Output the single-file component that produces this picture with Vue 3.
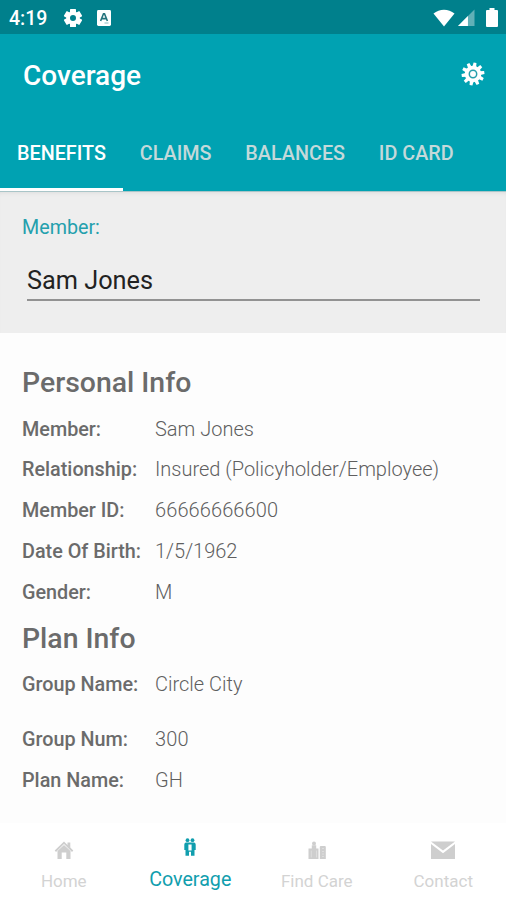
<script setup>
import { ref } from 'vue'

const tabs = ['BENEFITS', 'CLAIMS', 'BALANCES', 'ID CARD']
const activeTab = ref('BENEFITS')

const sections = [
  {
    title: 'Personal Info',
    rows: [
      { label: 'Member:', value: 'Sam Jones' },
      { label: 'Relationship:', value: 'Insured (Policyholder/Employee)' },
      { label: 'Member ID:', value: '66666666600' },
      { label: 'Date Of Birth:', value: '1/5/1962' },
      { label: 'Gender:', value: 'M' },
    ],
  },
  {
    title: 'Plan Info',
    rows: [
      { label: 'Group Name:', value: 'Circle City', spaced: true },
      { label: 'Group Num:', value: '300' },
      { label: 'Plan Name:', value: 'GH' },
    ],
  },
]

const teeth = Array.from({ length: 10 }, (_, i) => i * 36 + 10)
const cogTeeth = [0, 60, 120, 180, 240, 300]
</script>

<template>
  <div class="screen">
    <div class="status">
      <span class="clock">4:19</span>
      <svg class="cog" viewBox="0 0 20 20">
        <rect v-for="a in cogTeeth" :key="a" x="7" y="1" width="6" height="5" rx="0.6" :transform="`rotate(${a} 10 10)`" />
        <circle cx="10" cy="10" r="4.9" fill="none" stroke="#fff" stroke-width="3.8" />
      </svg>
      <svg class="app-badge" viewBox="0 0 14 16">
        <rect width="14" height="16" rx="1.4" />
        <path d="M3.6 11 6.5 3.8h1L10.4 11M4.8 8.6h4.4" fill="none" stroke="#26747d" stroke-width="1.6" />
        <path d="M7.5 13h4" stroke="#8bbcc1" stroke-width="1" />
      </svg>
      <span class="grow"></span>
      <svg class="wifi" viewBox="0 0 22 18"><path d="M.5 4.6C6.5-.5 15.5-.5 21.500 4.600L11 17.500z" /></svg>
      <svg class="signal" viewBox="0 0 18 18">
        <path d="M17.500 0V17.500H0z" opacity="0.38" />
        <path d="M10.500 7V17.500H0z" />
      </svg>
      <svg class="battery" viewBox="0 0 12 19"><path d="M3.500 0h5v2H11q1 0 1 1v15q0 1-1 1H1q-1 0-1-1V3q0-1 1-1h2.500z" /></svg>
    </div>

    <header class="bar">
      <h1>Coverage</h1>
      <svg class="gear" viewBox="0 0 24 24">
        <path v-for="a in teeth" :key="a" d="M10 6 10.600 .6h2.900L14 6z" :transform="`rotate(${a} 12 12)`" />
        <circle cx="12" cy="12" r="8.300" />
        <circle cx="12" cy="12" r="3.700" fill="none" stroke="#279fac" stroke-width="1.500" />
      </svg>
    </header>

    <nav class="tabs">
      <button v-for="t in tabs" :key="t" :class="{ active: t === activeTab }" @click="activeTab = t">{{ t }}</button>
    </nav>

    <section class="picker">
      <span class="caption">Member:</span>
      <div class="field">Sam Jones</div>
    </section>

    <main>
      <section v-for="s in sections" :key="s.title">
        <h2>{{ s.title }}</h2>
        <dl>
          <div v-for="r in s.rows" :key="r.label" class="row" :class="{ spaced: r.spaced }">
            <dt>{{ r.label }}</dt>
            <dd :class="{ numeric: /^\d+$/.test(r.value) }">{{ r.value }}</dd>
          </div>
        </dl>
      </section>
    </main>

    <footer>
      <div class="item">
        <svg viewBox="0 0 24 24">
          <path d="M12 3.500 15.500 7V4.500h2.800v5l3 3-1.300 1.400-8-7.800-8 7.800-1.300-1.400z" />
          <path d="M5.500 13 12 7l6.500 6v8h-4.200v-6.500H9.700V21H5.500z" />
        </svg>
        <span>Home</span>
      </div>
      <div class="item current">
        <svg viewBox="0 0 24 24">
          <circle cx="9.500" cy="5.200" r="1.900" /><circle cx="14.500" cy="5.200" r="1.900" />
          <path d="M8 7.600h8q1.500 0 1.700 2v5.400h-1.200v5.700h-3.500v-4h-2v4H7.500V15H6.300V9.600Q6.500 7.600 8 7.600zM10.400 9.500v6h3.200v-6z" fill-rule="evenodd" />
        </svg>
        <span>Coverage</span>
      </div>
      <div class="item">
        <svg viewBox="0 0 24 24">
          <circle cx="9" cy="5.600" r="2" />
          <path d="M6.800 7.300h4.400V10.500H13.500V21H3.500V10.500H6.800zM14.800 9q0-1 1-1h4q1 0 1 1v12h-6z" />
          <path d="M6.300 12.500v7M11.500 12.500v7M17 10.500h2M17 13.500h2M17 16h2M17 18.500h2" stroke="#e4e4e4" stroke-width="0.700" />
        </svg>
        <span>Find Care</span>
      </div>
      <div class="item">
        <svg viewBox="0 0 24 24">
          <path d="M0 3.500h24L12 12.500z" />
          <path d="M0 5.900 12 15.200 24 5.900V21H0z" />
        </svg>
        <span>Contact</span>
      </div>
    </footer>
  </div>
</template>

<style>
body {
  background: #fdfdfd;
}
</style>

<style scoped>
.screen {
  width: 506px;
  height: 900px;
  display: flex;
  flex-direction: column;
  overflow: hidden;
  background: #fdfdfd;
  font-family: Roboto, sans-serif;
  color: #6b6b6b;
}
svg {
  fill: #fff;
  flex: none;
}
.status {
  flex: none;
  height: 34px;
  box-sizing: border-box;
  display: flex;
  align-items: center;
  padding: 1px 8px 0 9px;
  background: #00808c;
  color: #fff;
}
.clock {
  width: 54px;
  padding-top: 2px;
  font-size: 19.500px;
  font-weight: 500;
}
.cog {
  width: 20px;
  height: 20px;
}
.app-badge {
  width: 14px;
  height: 16px;
  margin-left: 14px;
}
.grow {
  flex: 1;
}
.wifi {
  width: 22px;
  height: 18px;
}
.signal {
  width: 17px;
  height: 18px;
  margin-left: 3px;
}
.battery {
  width: 12px;
  height: 19px;
  margin-left: 11px;
}
.bar {
  flex: none;
  height: 81px;
  box-sizing: border-box;
  display: flex;
  align-items: center;
  justify-content: space-between;
  padding: 0 21px 2px 23px;
  background: #00a2b2;
}
h1 {
  margin: 0;
  padding-top: 3px;
  font-size: 28px;
  font-weight: 500;
  color: #fff;
}
.gear {
  width: 24px;
  height: 24px;
}
.tabs {
  flex: none;
  height: 77px;
  display: flex;
  background: #00a2b2;
  border-bottom: 1px solid #a9c5c8;
  box-sizing: border-box;
}
.tabs button {
  box-sizing: border-box;
  border: 0;
  border-bottom: 3px solid transparent;
  padding: 3px 16.800px 0 17px;
  background: none;
  font: 500 19.800px Roboto, sans-serif;
  color: #c4d9da;
}
.tabs .active {
  color: #fff;
  border-color: #fff;
}
.picker {
  flex: none;
  height: 141px;
  box-sizing: border-box;
  padding: 24px 26px 0 22px;
  background: #eee;
  box-shadow: inset 0 4px 4px -3px #ddd;
}
.caption {
  display: block;
  line-height: 24px;
  font-size: 19.700px;
  color: #24a0ad;
}
.field {
  height: 61px;
  box-sizing: border-box;
  margin: 0 0 0 5px;
  padding-top: 25px;
  line-height: 32px;
  font-size: 25.300px;
  color: #222;
  border-bottom: 2px solid #929292;
}
main {
  flex: 1;
  padding: 33px 22px 0;
}
h2 {
  margin: 0;
  height: 42.500px;
  line-height: 34px;
  font-size: 28.400px;
  font-weight: 500;
}
dl {
  margin: 0;
  padding-bottom: 9.500px;
}
.row {
  height: 40.800px;
  display: grid;
  grid-template-columns: 133px 1fr;
  line-height: 41px;
  font-size: 19.800px;
}
.row.spaced {
  height: 54.600px;
}
dt {
  font-weight: 500;
  white-space: nowrap;
}
dd {
  margin: 0;
  font-size: 20px;
  font-weight: 300;
  color: #5f5f5f;
  white-space: nowrap;
}
.numeric {
  letter-spacing: 0.100px;
}
footer {
  flex: none;
  height: 77px;
  display: grid;
  grid-template-columns: repeat(4, 1fr);
  background: #fff;
}
.item {
  display: flex;
  flex-direction: column;
  align-items: center;
  padding: 15px 0 0 1px;
  font-size: 17px;
  color: #d3d3d3;
}
.item svg {
  width: 24px;
  height: 24px;
  fill: #cecece;
}
.item span {
  margin-top: 8px;
  line-height: 22px;
}
.item.current {
  padding-top: 12px;
  font-size: 19.700px;
  color: #119eae;
}
.item.current svg {
  fill: #119eae;
}
.item.current span {
  margin-top: 10px;
}
</style>
